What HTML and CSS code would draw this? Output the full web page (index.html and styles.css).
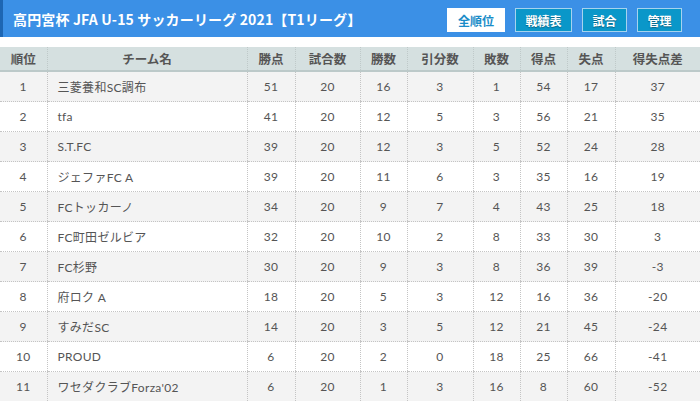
FILE: index.html
```html
<!DOCTYPE html>
<html lang="ja">
<head>
<meta charset="utf-8">
<title>高円宮杯 JFA U-15 サッカーリーグ 2021</title>
<link rel="stylesheet" href="styles.css">
</head>
<body>
<header class="bar">
  <h1 class="title">高円宮杯 JFA U-15 サッカーリーグ 2021【T1リーグ】</h1>
  <nav class="nav">
    <a class="btn active">全順位</a>
    <a class="btn">戦績表</a>
    <a class="btn">試合</a>
    <a class="btn">管理</a>
  </nav>
</header>
<table class="standings">
  <colgroup>
    <col class="c-rank"><col class="c-team"><col class="c-pts"><col class="c-gp"><col class="c-w"><col class="c-d"><col class="c-l"><col class="c-gf"><col class="c-ga"><col>
  </colgroup>
  <thead>
    <tr><th>順位</th><th>チーム名</th><th>勝点</th><th>試合数</th><th>勝数</th><th>引分数</th><th>敗数</th><th>得点</th><th>失点</th><th>得失点差</th></tr>
  </thead>
  <tbody>
    <tr><td>1</td><td class="team">三菱養和SC調布</td><td>51</td><td>20</td><td>16</td><td>3</td><td>1</td><td>54</td><td>17</td><td>37</td></tr>
    <tr><td>2</td><td class="team">tfa</td><td>41</td><td>20</td><td>12</td><td>5</td><td>3</td><td>56</td><td>21</td><td>35</td></tr>
    <tr><td>3</td><td class="team">S.T.FC</td><td>39</td><td>20</td><td>12</td><td>3</td><td>5</td><td>52</td><td>24</td><td>28</td></tr>
    <tr><td>4</td><td class="team">ジェファFC A</td><td>39</td><td>20</td><td>11</td><td>6</td><td>3</td><td>35</td><td>16</td><td>19</td></tr>
    <tr><td>5</td><td class="team">FCトッカーノ</td><td>34</td><td>20</td><td>9</td><td>7</td><td>4</td><td>43</td><td>25</td><td>18</td></tr>
    <tr><td>6</td><td class="team">FC町田ゼルビア</td><td>32</td><td>20</td><td>10</td><td>2</td><td>8</td><td>33</td><td>30</td><td>3</td></tr>
    <tr><td>7</td><td class="team">FC杉野</td><td>30</td><td>20</td><td>9</td><td>3</td><td>8</td><td>36</td><td>39</td><td>-3</td></tr>
    <tr><td>8</td><td class="team">府ロク A</td><td>18</td><td>20</td><td>5</td><td>3</td><td>12</td><td>16</td><td>36</td><td>-20</td></tr>
    <tr><td>9</td><td class="team">すみだSC</td><td>14</td><td>20</td><td>3</td><td>5</td><td>12</td><td>21</td><td>45</td><td>-24</td></tr>
    <tr><td>10</td><td class="team">PROUD</td><td>6</td><td>20</td><td>2</td><td>0</td><td>18</td><td>25</td><td>66</td><td>-41</td></tr>
    <tr><td>11</td><td class="team">ワセダクラブForza'02</td><td>6</td><td>20</td><td>1</td><td>3</td><td>16</td><td>8</td><td>60</td><td>-52</td></tr>
  </tbody>
</table>
</body>
</html>
```
FILE: styles.css
```css
html, body {
  margin: 0;
  padding: 0;
  background: #ffffff;
  font-family: Lato, "Noto Sans CJK JP", sans-serif;
  color: #555555;
}

.bar {
  height: 37px;
  background: #3b90e6;
  border-left: 3px solid #1d66b3;
  display: flex;
  align-items: center;
  justify-content: space-between;
  padding: 0 18px 0 10px;
  box-sizing: border-box;
}

.title {
  margin: 0;
  font-family: "Noto Sans CJK JP", sans-serif;
  font-size: 14px;
  font-weight: bold;
  color: #ffffff;
  letter-spacing: 0.15px;
  white-space: nowrap;
}

.nav {
  display: flex;
  gap: 10px;
  margin-top: 3px;
}

.btn {
  display: flex;
  align-items: center;
  justify-content: center;
  height: 24px;
  padding: 0 9.5px;
  box-sizing: border-box;
  background: #0a97c9;
  border: 1px solid #a6d3ee;
  color: #ffffff;
  font-family: "Noto Sans CJK JP", sans-serif;
  font-size: 12px;
  font-weight: bold;
  text-shadow: 0 1px 1px rgba(0, 0, 0, 0.35);
  white-space: nowrap;
}

.btn.active {
  background: #ffffff;
  border-color: #ffffff;
  color: #1a8cc8;
  text-shadow: none;
  padding: 0 10px;
}

.standings {
  width: 100%;
  margin-top: 10px;
  border-collapse: collapse;
  table-layout: fixed;
  font-size: 12px;
}

.c-rank { width: 47px; }
.c-team { width: 200px; }
.c-pts { width: 48px; }
.c-gp { width: 65px; }
.c-w { width: 47px; }
.c-d { width: 66px; }
.c-l { width: 47px; }
.c-gf { width: 47px; }
.c-ga { width: 48px; }

.standings th {
  height: 23px;
  padding: 0;
  background: #d5e0e0;
  border-bottom: 2px solid #bcc9c9;
  border-left: 1px dotted #bfc9c9;
  font-family: "Noto Sans CJK JP", sans-serif;
  font-size: 12.5px;
  font-weight: bold;
  color: #555555;
  text-align: center;
}

.standings th:first-child,
.standings td:first-child {
  border-left: none;
}

.standings td {
  height: 29px;
  padding: 0;
  border-bottom: 1px dotted #c4c4c4;
  border-left: 1px dotted #c4c4c4;
  text-align: center;
  letter-spacing: 0.3px;
  white-space: nowrap;
}

.standings tbody tr:nth-child(odd) td {
  background: #f3f3f3;
}

.standings td.team {
  text-align: left;
  padding-left: 10px;
}
```
